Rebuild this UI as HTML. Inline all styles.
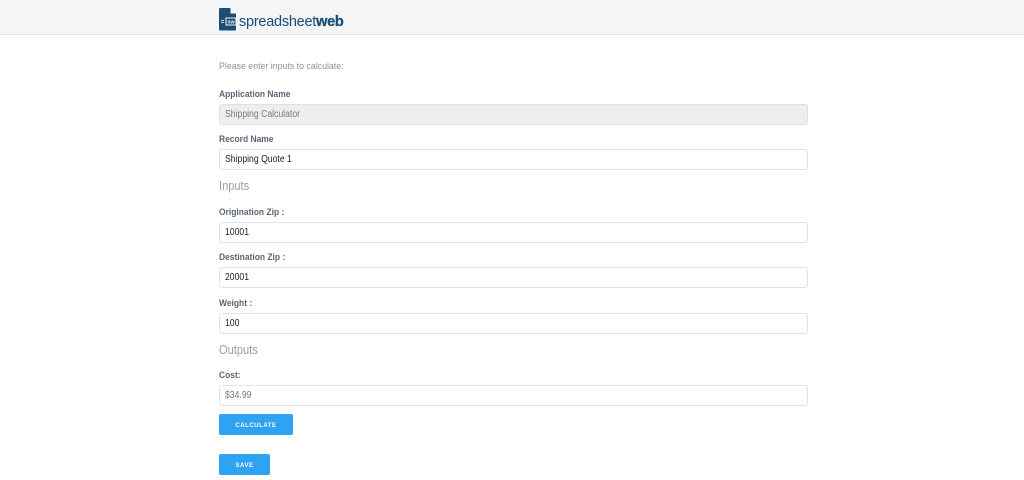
<!DOCTYPE html>
<html>
<head>
<meta charset="utf-8">
<style>
html,body{margin:0;padding:0;background:#fff;width:1024px;height:480px;overflow:hidden}
body{font-family:"Liberation Sans",sans-serif;position:relative}
.hd{position:absolute;left:0;top:0;width:1024px;height:34px;background:#f4f5f7;border-bottom:1px solid #e4e5e7}
.t{position:absolute;white-space:nowrap;line-height:12px;transform-origin:left center}
.l{left:219px;font-size:9.5px;font-weight:bold;color:#5a6675;transform:scaleX(.89)}
.h{left:219px;font-size:12.5px;color:#999ea6;line-height:14px;transform:scaleX(.885)}
.i{position:absolute;left:219px;width:587px;height:19px;border:1px solid #e2e3e5;border-radius:3px;background:#fff;font-size:10px;line-height:19px;color:#222}
.i span{position:absolute;left:5px;top:0;white-space:nowrap;transform:scaleX(.865);transform-origin:left center}
.b{position:absolute;left:219px;background:#2ea3f2;border-radius:2px;color:#fff;font-size:6px;font-weight:bold;letter-spacing:.55px;text-align:center}
</style>
</head>
<body>
<div class="hd"></div>
<svg style="position:absolute;left:219px;top:8px" width="18" height="23" viewBox="0 0 18 23">
<path d="M1 0H11L17 6V21.5Q17 22.5 16 22.5H1Q0 22.5 0 21.5V1Q0 0 1 0Z" fill="#1d4d74"/>
<path d="M11.5 0L17 5.5H11.5Z" fill="#f4f5f7"/>
<rect x="6.5" y="9.5" width="11" height="8" fill="#f4f5f7"/>
<rect x="7.5" y="10.5" width="9" height="6" fill="#1d4d74"/>
<rect x="2" y="12" width="3" height="1" fill="#cfd9e2"/>
<rect x="2" y="14" width="3" height="1" fill="#cfd9e2"/>
<text x="8.5" y="15.4" font-family="Liberation Sans" font-size="4.5" font-weight="bold" fill="#fff">SW</text>
</svg>
<div class="t" style="left:239px;top:14px;font-size:14.5px;line-height:16px;color:#1d4d74;letter-spacing:-.25px">spreadsheet<b style="color:#1d4d74;-webkit-text-stroke:.3px #1d4d74">web</b></div>

<div class="t" style="left:219px;top:61px;font-size:9.5px;color:#8b929b;transform:scaleX(.925)">Please enter inputs to calculate:</div>

<div class="t l" style="top:89px">Application Name</div>
<div class="i" style="top:103.5px;background:#eeeeee;color:#77797c;border-color:#e0e0e0"><span>Shipping Calculator</span></div>

<div class="t l" style="top:134px">Record Name</div>
<div class="i" style="top:149px"><span>Shipping Quote 1</span></div>

<div class="t h" style="top:179px">Inputs</div>

<div class="t l" style="top:207px">Origination Zip :</div>
<div class="i" style="top:222px"><span>10001</span></div>

<div class="t l" style="top:252px">Destination Zip :</div>
<div class="i" style="top:267px"><span>20001</span></div>

<div class="t l" style="top:298px">Weight :</div>
<div class="i" style="top:313px"><span>100</span></div>

<div class="t h" style="top:343px">Outputs</div>

<div class="t l" style="top:370px">Cost:</div>
<div class="i" style="top:385px;color:#77797c"><span>$34.99</span></div>

<div class="b" style="top:414px;width:74px;height:21px;line-height:25px">CALCULATE</div>
<div class="b" style="top:454px;width:51px;height:21px;line-height:25px">SAVE</div>
</body>
</html>
